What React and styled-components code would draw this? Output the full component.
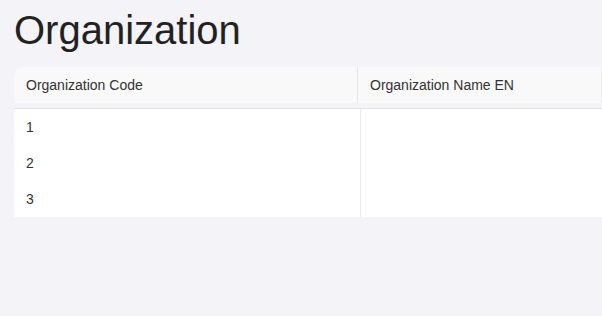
import React from "react";
import styled, { createGlobalStyle } from "styled-components";

const GlobalStyle = createGlobalStyle`
  html, body {
    margin: 0;
    padding: 0;
    background: #f3f3f8;
    font-family: "Liberation Sans", Arial, sans-serif;
  }
`;

const Page = styled.div`
  padding: 6px 0 0 14px;
  width: 588px;
`;

const Title = styled.h1`
  margin: 0;
  font-size: 40px;
  line-height: 48px;
  font-weight: 400;
  color: #222;
`;

const Table = styled.div`
  margin-top: 13px;
  display: flex;
  flex-direction: column;
`;

const HeaderRow = styled.div`
  display: flex;
  height: 36px;
  background: #f9f9f9;
  border-top-left-radius: 10px;
  border-right: 1px solid #ececec;
  margin-bottom: 5px;
`;

const HeaderCell = styled.div`
  display: flex;
  align-items: center;
  padding-left: 12px;
  font-size: 14px;
  color: #333;
  box-sizing: border-box;
  ${(p) => (p.$width ? `width: ${p.$width}px; flex: none;` : "flex: 1;")}
  ${(p) => (p.$divider ? "border-right: 1px solid #e6e6e6;" : "")}
`;

const Body = styled.div`
  background: #fff;
  border-top: 1px solid #e2e2e8;
`;

const Row = styled.div`
  display: flex;
  height: 36px;
`;

const Cell = styled.div`
  display: flex;
  align-items: center;
  padding-left: 12px;
  font-size: 14px;
  color: #333;
  box-sizing: border-box;
  ${(p) => (p.$width ? `width: ${p.$width}px; flex: none;` : "flex: 1;")}
  ${(p) => (p.$divider ? "border-right: 1px solid #ebebeb;" : "")}
`;

const rows = [
  { code: "1", name: "" },
  { code: "2", name: "" },
  { code: "3", name: "" },
];

export default function App() {
  return (
    <>
      <GlobalStyle />
      <Page>
        <Title>Organization</Title>
        <Table>
          <HeaderRow>
            <HeaderCell $width={344} $divider>
              Organization Code
            </HeaderCell>
            <HeaderCell>Organization Name EN</HeaderCell>
          </HeaderRow>
          <Body>
            {rows.map((r) => (
              <Row key={r.code}>
                <Cell $width={347} $divider>
                  {r.code}
                </Cell>
                <Cell>{r.name}</Cell>
              </Row>
            ))}
          </Body>
        </Table>
      </Page>
    </>
  );
}
